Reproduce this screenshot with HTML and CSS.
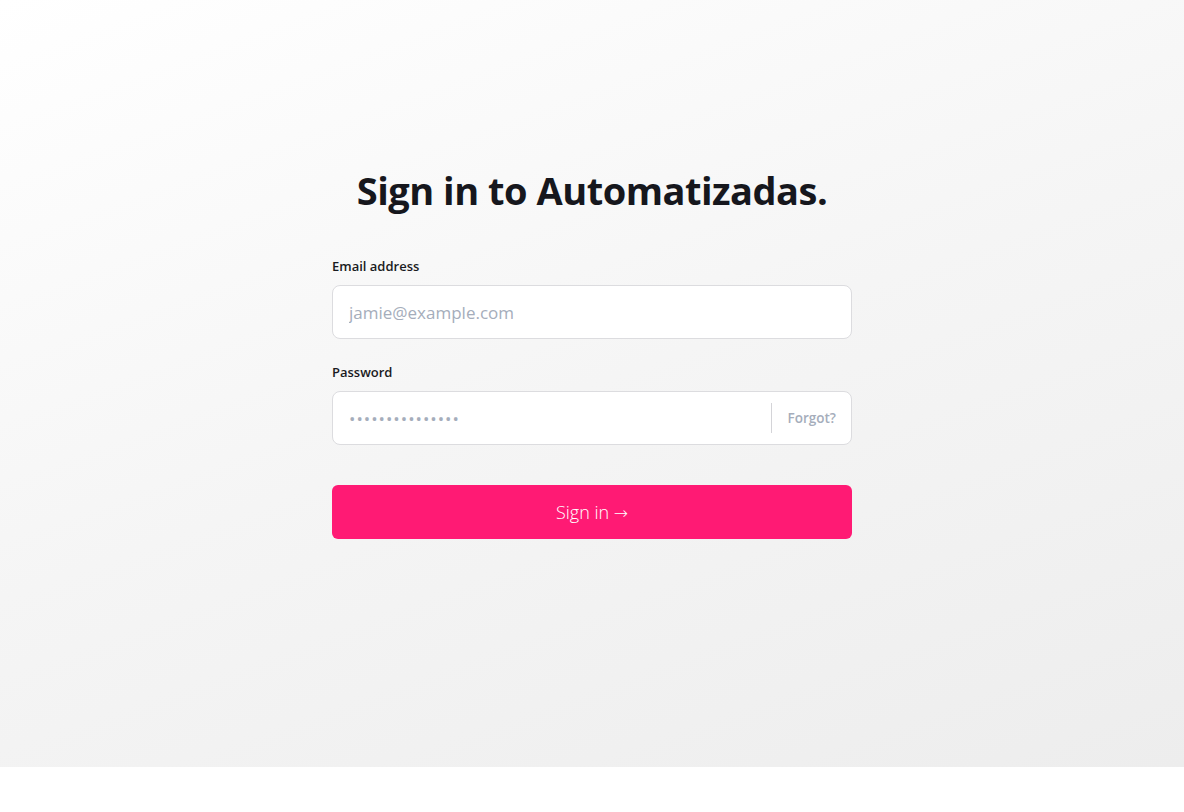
FILE: index.html
```html
<!DOCTYPE html>
<html>
<head>
<meta charset="utf-8">
<link rel="stylesheet" href="styles.css">
</head>
<body>
<main class="screen">
  <form class="card">
    <h1 class="title">Sign in to Automatizadas.</h1>
    <label class="label">Email address</label>
    <div class="field">
      <input class="input" type="email" placeholder="jamie@example.com">
    </div>
    <label class="label label-pw">Password</label>
    <div class="field">
      <input class="input input-pw" type="password" placeholder="•••••••••••••••">
      <span class="divider"></span>
      <a class="forgot" href="#">Forgot?</a>
    </div>
    <button class="submit" type="button">Sign in <span class="arrow">→</span></button>
  </form>
</main>
</body>
</html>
```
FILE: styles.css
```css
html, body {
  margin: 0;
  padding: 0;
  background: #fff;
}
body {
  font-family: "Open Sans", "Noto Sans", "Liberation Sans", sans-serif;
  color: #16171d;
}
.screen {
  height: 767px;
  background: linear-gradient(160deg, #ffffff 0%, #f5f5f5 50%, #ededed 100%);
  display: flex;
  justify-content: center;
  box-sizing: border-box;
  padding-top: 162px;
}
.card {
  width: 520px;
  display: flex;
  flex-direction: column;
}
.title {
  margin: 0 0 39px;
  text-align: center;
  font-size: 38px;
  font-weight: 700;
  line-height: 56px;
  letter-spacing: -0.5px;
  color: #16171d;
}
.label {
  font-size: 13px;
  font-weight: 600;
  line-height: 18px;
  margin-bottom: 10px;
  color: #1a1b22;
}
.label-pw {
  margin-top: 24px;
}
.field {
  height: 54px;
  box-sizing: border-box;
  border: 1px solid #dcdcdf;
  border-radius: 8px;
  background: #fff;
  display: flex;
  align-items: center;
}
.input {
  flex: 1;
  border: 0;
  outline: none;
  background: transparent;
  font-family: inherit;
  font-size: 17px;
  padding: 0 16px;
  height: 100%;
  color: #333;
}
.input-pw {
  letter-spacing: 1px;
}
.input::placeholder {
  color: #a5adbb;
}
.divider {
  width: 1px;
  height: 30px;
  background: #d4d4d8;
}
.forgot {
  font-size: 13.5px;
  font-weight: 600;
  color: #a5adbb;
  text-decoration: none;
  padding: 0 15px 0 16px;
}
.submit {
  margin-top: 40px;
  height: 54px;
  border: 0;
  border-radius: 6px;
  background: #ff1a74;
  color: #fff;
  font-family: inherit;
  font-size: 18px;
  font-weight: 300;
  cursor: pointer;
}
.arrow {
  font-family: "DejaVu Sans", sans-serif;
  font-size: 17px;
}
```
